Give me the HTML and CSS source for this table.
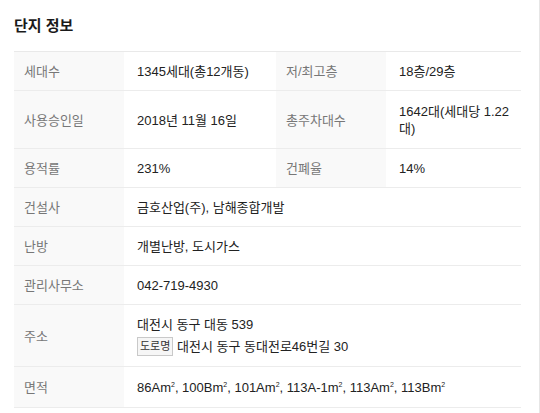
FILE: index.html
```html
<!DOCTYPE html>
<html lang="ko">
<head>
<meta charset="utf-8">
<title>단지 정보</title>
<link rel="stylesheet" href="styles.css">
</head>
<body>
<div class="panel">
  <h2 class="title">단지 정보</h2>
  <table class="info">
    <colgroup>
      <col class="c-label">
      <col class="c-val1">
      <col class="c-label">
      <col class="c-val2">
    </colgroup>
    <tr>
      <th>세대수</th><td>1345세대(총12개동)</td>
      <th>저/최고층</th><td>18층/29층</td>
    </tr>
    <tr class="tall">
      <th>사용승인일</th><td>2018년 11월 16일</td>
      <th>총주차대수</th><td>1642대(세대당 1.22대)</td>
    </tr>
    <tr>
      <th>용적률</th><td>231%</td>
      <th>건폐율</th><td>14%</td>
    </tr>
    <tr>
      <th>건설사</th><td colspan="3">금호산업(주), 남해종합개발</td>
    </tr>
    <tr>
      <th>난방</th><td colspan="3">개별난방, 도시가스</td>
    </tr>
    <tr>
      <th>관리사무소</th><td colspan="3">042-719-4930</td>
    </tr>
    <tr>
      <th>주소</th>
      <td colspan="3">
        <div>대전시 동구 대동 539</div>
        <div class="road"><span class="badge">도로명</span> 대전시 동구 동대전로46번길 30</div>
      </td>
    </tr>
    <tr class="area">
      <th>면적</th><td colspan="3">86Am<span class="sq">2</span>, 100Bm<span class="sq">2</span>, 101Am<span class="sq">2</span>, 113A-1m<span class="sq">2</span>, 113Am<span class="sq">2</span>, 113Bm<span class="sq">2</span></td>
    </tr>
  </table>
</div>
</body>
</html>
```
FILE: styles.css
```css
html, body {
  margin: 0;
  padding: 0;
  background: #fff;
}
body {
  font-family: "Liberation Sans", "Noto Sans CJK KR", sans-serif;
  color: #222;
}
.panel {
  width: 540px;
  height: 413px;
  box-sizing: border-box;
  border-right: 1px solid #e6e6e6;
  padding: 16px 18px 0 14px;
  overflow: hidden;
}
.title {
  margin: 0 0 15px;
  font-size: 15px;
  line-height: 20px;
  font-weight: bold;
  color: #1a1a1a;
}
.info {
  width: 507px;
  table-layout: fixed;
  border-collapse: collapse;
  border-top: 1px solid #e9e9e9;
  font-size: 13px;
  line-height: 17px;
}
.c-label { width: 110px; }
.c-val1 { width: 152px; }
.c-val2 { width: 135px; }
.info th,
.info td {
  padding: 11px 10px 10px 12px;
  border-bottom: 1px solid #ececec;
  text-align: left;
  vertical-align: middle;
}
.info th {
  padding-left: 10px;
  background: #f9f9f9;
  color: #777;
  font-weight: normal;
}
.info td {
  padding-left: 13px;
  color: #222;
}
.info .tall td,
.info .tall th {
  padding-top: 12px;
  padding-bottom: 11px;
}
.road {
  margin-top: 4px;
  line-height: 19px;
}
.badge {
  display: inline-block;
  box-sizing: border-box;
  height: 19px;
  padding: 0 2px;
  border: 1px solid #c9c9c9;
  background: #f6f6f6;
  font-size: 11px;
  line-height: 17px;
  color: #333;
  vertical-align: top;
}
.sq {
  font-size: 7px;
  line-height: 0;
  vertical-align: 5px;
}
.info .area td,
.info .area th {
  padding-top: 12px;
  padding-bottom: 11px;
}
```
